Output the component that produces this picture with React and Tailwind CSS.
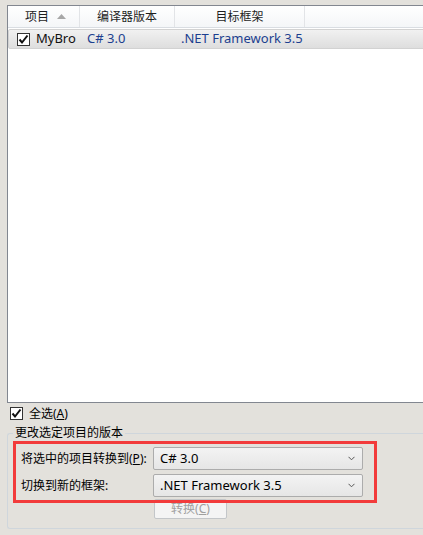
import React from 'react';

// Small check box glyph used by the list row and the "select all" option
const CheckBox = ({ className = '' }) => (
  <span className={`inline-flex w-[13px] h-[13px] border border-[#333] bg-white items-center justify-center ${className}`}>
    <svg width="11" height="11" viewBox="0 0 11 11">
      <path d="M1.5 5.5 L4 8.5 L9.5 1.5" fill="none" stroke="#111" strokeWidth="2" />
    </svg>
  </span>
);

const Chevron = () => (
  <svg width="7" height="5" viewBox="0 0 7 5" className="mr-[7px]">
    <path d="M0.5 0.8 L3.5 3.8 L6.5 0.8" fill="none" stroke="#555" strokeWidth="1" />
  </svg>
);

const ComboBox = ({ value }) => (
  <div className="w-[210px] h-[23px] flex items-center justify-between border border-[#acacac] rounded-[2px] bg-gradient-to-b from-[#f3f3f3] to-[#e6e6e6] text-[13px] text-black pl-[6px]">
    <span>{value}</span>
    <Chevron />
  </div>
);

const columns = [
  { title: '项目', width: 'w-[72px]', sort: true },
  { title: '编译器版本', width: 'w-[95px]' },
  { title: '目标框架', width: 'w-[130px]' },
];

const App = () => {
  return (
    <div className="w-[423px] h-[535px] overflow-hidden bg-[#e3e1dc] font-['Noto_Sans','Noto_Sans_CJK_SC',sans-serif] text-[12px] text-black">
      {/* project list */}
      <div className="pt-[5px] pl-[7px]">
        <div className="w-[420px] h-[398px] border border-r-0 border-[#828790] bg-white">
          <div className="flex h-[22px] bg-gradient-to-b from-white to-[#f4f6f8] border-b border-[#d9dde2]">
            {columns.map((col) => (
              <div
                key={col.title}
                className={`${col.width} h-full flex items-center justify-center border-r border-[#e2e4e7] text-[#1e1e1e]`}
              >
                <span className={col.sort ? 'ml-[4px]' : ''}>{col.title}</span>
                {col.sort && (
                  <svg width="9" height="5" viewBox="0 0 9 5" className="ml-[8px]">
                    <path d="M0 5 L4.5 0 L9 5 Z" fill="#a7a7a7" />
                  </svg>
                )}
              </div>
            ))}
            <div className="flex-1" />
          </div>

          <div className="flex items-center h-[20px] mt-[1px] border border-[#d2d2d2] rounded-[2px] bg-gradient-to-b from-[#f1f1f1] to-[#dedede] text-[13px]">
            <div className="w-[72px] flex items-center pl-[8px] shrink-0">
              <CheckBox />
              <span className="ml-[6px] text-[#111]">MyBro</span>
            </div>
            <div className="w-[95px] pl-[6px] shrink-0 text-[#1c3f8f]">C# 3.0</div>
            <div className="pl-[5px] text-[#1c3f8f]">.NET Framework 3.5</div>
          </div>
        </div>
      </div>

      {/* select all */}
      <div className="flex items-center h-[13px] mt-[4px] ml-[10px]">
        <CheckBox />
        <span className="ml-[6px] text-[12px]">
          全选(<span className="underline">A</span>)
        </span>
      </div>

      {/* change version group */}
      <fieldset className="ml-[7px] mt-[5px] w-[420px] border border-r-0 border-[#cfd6dc] rounded-[3px] pb-[9px]">
        <legend className="ml-[5px] px-[2px] leading-[16px]">更改选定项目的版本</legend>

        <div className="relative ml-[13px] mt-[6px]">
          <div className="flex items-center">
            <span className="w-[132px]">
              将选中的项目转换到(<span className="underline">P</span>):
            </span>
            <ComboBox value="C# 3.0" />
          </div>
          <div className="flex items-center mt-[4px]">
            <span className="w-[132px]">切换到新的框架:</span>
            <ComboBox value=".NET Framework 3.5" />
          </div>
          <div className="ml-[133px] mt-[2px] w-[73px] h-[20px] flex items-center justify-center border border-[#c3c6c9] rounded-[2px] bg-[#f4f4f4] text-[#a0a0a0]">
            转换(<span className="underline">C</span>)
          </div>

          {/* red highlight drawn over the two rows */}
          <div className="absolute -left-[8px] -top-[6px] w-[364px] h-[62px] border-[3px] border-[#f23b3b] pointer-events-none" />
        </div>
      </fieldset>
    </div>
  );
};

export default App;
